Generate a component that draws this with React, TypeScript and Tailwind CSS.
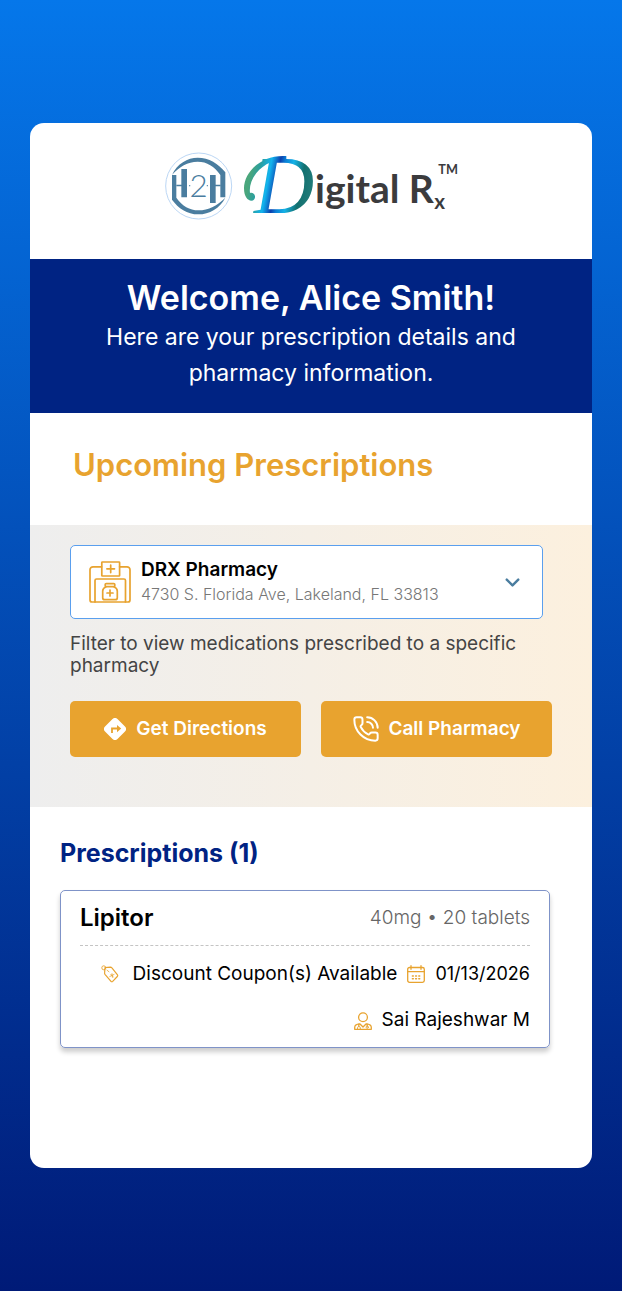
import React, { useState } from "react";
import { ChevronDown, PhoneCall } from "lucide-react";

const pharmacies = [{
  id: "drx",
  name: "DRX Pharmacy",
  address: "4730 S. Florida Ave, Lakeland, FL 33813"
}];

const prescriptions = [{
  name: "Lipitor",
  dose: "40mg • 20 tablets",
  coupon: "Discount Coupon(s) Available",
  date: "01/13/2026",
  doctor: "Sai Rajeshwar M"
}];

const Logo = () => <svg className="w-[312px] h-24" viewBox="0 -24 936 288" role="img" aria-label="H2H Digital Rx">
    <defs>
      <linearGradient id="logo-d" gradientUnits="userSpaceOnUse" x1="285" y1="90" x2="467" y2="125">
        <stop offset="0" stopColor="#4aa67c" />
        <stop offset="0.14" stopColor="#2a9fa0" />
        <stop offset="0.3" stopColor="#12b4ee" />
        <stop offset="0.44" stopColor="#0b3fae" />
        <stop offset="0.52" stopColor="#0b7fd6" />
        <stop offset="0.66" stopColor="#14b2e6" />
        <stop offset="0.84" stopColor="#12706f" />
        <stop offset="1" stopColor="#1f7a78" />
      </linearGradient>
    </defs>
    <circle cx="131" cy="123" r="99" fill="none" stroke="#bcd7f5" strokeWidth="3" />
    <g fill="#4a7d9f">
      <path d="M51 90C66 56 98 38 128 38c34 0 62 18 83 44v75h-15V90c-18-26-40-40-68-40-30 0-55 15-77 40z" />
      <path d="M211 158c-16 32-48 50-81 50-34 0-60-18-79-44V90h13v68c18 25 40 38 66 38 31 0 57-14 81-38z" />
      <path d="M79 72h17v85H79zM165 90h17v84h-17zM64 119h15v5H64zM182 119h15v5h-15z" />
      <circle cx="104" cy="122" r="2" />
      <circle cx="157" cy="122" r="2" />
      <text x="131" y="156" textAnchor="middle" fontSize="94" fontWeight="300" fontFamily="Lato, sans-serif">2</text>
    </g>
    <path d="M394 33C318 28 267 82 267 130c0 25 11 37 22 37 8 0 12-7 11-13-1-8-8-12-15-10-6-42 36-101 109-101z" fill="url(#logo-d)" />
    <text x="297" y="204" fontSize="250" fontStyle="italic" fontFamily="Liberation Serif, serif" fill="url(#logo-d)">D</text>
    <g fill="#3b3b3d" fontFamily="Lato, sans-serif" fontWeight="700">
      <text x="480" y="175" fontSize="117">igital R</text>
      <text x="838" y="193" fontSize="62">x</text>
      <text x="850" y="86" fontSize="38">TM</text>
    </g>
  </svg>;

const PharmacyIcon = () => <svg className="w-[42px] h-[42px] shrink-0" viewBox="0 0 42 42" fill="none" stroke="#e8a32f" strokeWidth="1.7" strokeLinecap="round" strokeLinejoin="round" aria-hidden="true">
    <path d="M12.6 5.8H4a3 3 0 0 0-3 3V39a2 2 0 0 0 2 2h36a2 2 0 0 0 2-2V8.800a3 3 0 0 0-3-3h-7.400" />
    <rect x="12.800" y="1" width="17.800" height="14" rx=".6" />
    <path d="M21.700 4v7.600M17.900 7.800h7.600M6 41V19.500a1.500 1.500 0 0 1 1.500-1.500h27.500a1.500 1.500 0 0 1 1.500 1.500V41" />
    <rect x="16.200" y="22.600" width="9.600" height="3" rx="1" />
    <path d="M17 25.800c-2 1-3.300 2.300-3.300 4.200v6.700c0 1.100.9 2 2 2h10.600a2 2 0 0 0 2-2V30c0-1.900-1.300-3.200-3.300-4.200M21 29v6M18 32h6" />
  </svg>;

const DirectionsIcon = () => <svg className="w-[22px] h-[22px]" viewBox="0 0 22 22" aria-hidden="true">
    <path d="M11 3.500L18.500 11 11 18.500 3.500 11z" fill="white" stroke="white" strokeWidth="7" strokeLinejoin="round" />
    <path d="M8 15V10.500h6" fill="none" stroke="#e8a32f" strokeWidth="1.800" />
    <path d="M13 7l4.200 3.600L13 14.200z" fill="#e8a32f" />
  </svg>;

const TagIcon = () => <svg className="w-[18px] h-[18px]" viewBox="0 0 18 18" fill="none" stroke="#e8a32f" strokeWidth="1.200" strokeLinecap="round" strokeLinejoin="round" aria-hidden="true">
    <path d="M4 2.500l5.500-.3c.6 0 1 .2 1.400.6l5.600 7c.4.6.3 1.200-.2 1.700l-4.600 4.900c-.5.5-1.200.5-1.700-.1L4 9.300c-.4-.5-.5-.9-.4-1.400z" />
    <circle cx="2.800" cy="2.800" r="2" strokeWidth=".9" />
    <path d="M6 5.200l2 1.600M8.800 11.500l4.200-2M9.800 9.300l2.600 2.800M11 8.700l.4 3.600" strokeWidth=".8" />
  </svg>;

const CalendarIcon = () => <svg className="w-[18px] h-[18px]" viewBox="0 0 18 18" fill="none" stroke="#e8a32f" strokeWidth="1.300" strokeLinecap="round" aria-hidden="true">
    <rect x=".7" y="2.500" width="16.600" height="14.800" rx="1.800" />
    <path d="M.7 6.700h16.600M4 .7v3.600M14 .7v3.600" />
    <path d="M5.400 11h.9M8.600 11h.9M11.800 11h.9M5.400 13.800h.9M8.600 13.800h.9M11.800 13.800h.9" strokeWidth="1.500" />
  </svg>;

const DoctorIcon = () => <svg className="w-[18px] h-[18px]" viewBox="0 0 18 18" fill="none" stroke="#e8a32f" strokeWidth="1.300" strokeLinecap="round" strokeLinejoin="round" aria-hidden="true">
    <circle cx="9" cy="5.200" r="4.400" />
    <path d="M5.500 11.800c-3 .2-4.800 1.500-4.800 3.700v1.800h16.600v-1.800c0-2.200-1.800-3.500-4.800-3.700M6 12l3 3 3-3M4.800 12v2M13.200 12v2" />
    <path d="M3.500 16.800v-1c0-1.800 2.800-1.800 2.800 0v1" strokeWidth=".9" />
    <circle cx="13.200" cy="15.200" r="1.100" strokeWidth=".9" />
  </svg>;

export default function App() {
  const [pharmacyId, setPharmacyId] = useState("drx");
  const pharmacy = pharmacies.find(p => p.id === pharmacyId) || pharmacies[0];
  return <div className="min-h-screen px-[30px] py-[123px] bg-linear-to-b/srgb from-[#0577ea] to-[#001a77] font-[Inter,sans-serif]">
      <main className="bg-white rounded-[14px] overflow-hidden pb-[120px]">
        <header className="flex justify-center pt-[14px] pb-[26px]">
          <Logo />
        </header>
        <section className="bg-[#002383] text-white text-center px-10 pt-[18px] pb-[22px]">
          <h1 className="text-[34px] leading-[42px] font-semibold">Welcome, Alice Smith!</h1>
          <p className="text-[23px] leading-9">
            Here are your prescription details and pharmacy information.
          </p>
        </section>
        <h2 className="px-[43px] pt-7 pb-9 text-[31px] leading-12 font-semibold text-[#e8a32f]">
          Upcoming Prescriptions
        </h2>
        <section className="bg-linear-to-r/srgb from-[#eeeeee] to-[#fcf0de] px-10 pt-5 pb-[50px]">
          <div className="flex items-center gap-[10px] mr-[9px] h-[74px] pl-[18px] pr-[18px] bg-white border border-[#5a9fee] rounded-[5px]">
            <PharmacyIcon />
            <div className="flex-1">
              <select id="pharmacy" value={pharmacyId} onChange={e => setPharmacyId(e.target.value)} className="block w-full appearance-none bg-transparent text-[19px] leading-6 font-semibold text-black">
                {pharmacies.map(p => <option key={p.id} value={p.id}>{p.name}</option>)}
              </select>
              <p className="text-base leading-6 font-light text-[#777777]">{pharmacy.address}</p>
            </div>
            <ChevronDown className="w-[23px] h-[23px] text-[#4a7d9f]" strokeWidth={2.500} aria-hidden="true" />
          </div>
          <label htmlFor="pharmacy" className="block mt-[14px] text-[19px] leading-[22px] text-[#444444]">
            Filter to view medications prescribed to a specific pharmacy
          </label>
          <div className="grid grid-cols-2 gap-5 mt-6">
            <button className="flex items-center justify-center gap-[10px] h-14 rounded-[5px] bg-[#e8a32f] text-white text-[19px] font-semibold">
              <DirectionsIcon />
              Get Directions
            </button>
            <button className="flex items-center justify-center gap-2 h-14 rounded-[5px] bg-[#e8a32f] text-white text-[19px] font-semibold">
              <PhoneCall className="w-7 h-7" strokeWidth={1.700} aria-hidden="true" />
              Call Pharmacy
            </button>
          </div>
        </section>
        <section className="pl-[30px] pr-[42px] pt-7">
          <h2 className="text-[25px] leading-9 font-bold text-[#002383]">
            Prescriptions ({prescriptions.length})
          </h2>
          {prescriptions.map(rx => <article key={rx.name} className="mt-[19px] px-[19px] pt-1 pb-[7px] border border-[#7f93c8] rounded-[5px] shadow-[0_4px_5px_rgba(0,0,0,0.2)]">
              <div className="flex items-center justify-between h-[51px] pb-1 border-b border-dashed border-[#c4c4c4]">
                <h3 className="text-2xl font-semibold">{rx.name}</h3>
                <span className="text-[19px] font-light text-[#666666]">{rx.dose}</span>
              </div>
              <div className="flex flex-wrap items-center justify-end gap-[10px] h-[46px] mt-[5px] text-[19px]">
                <TagIcon />
                <span className="ml-1">{rx.coupon}</span>
                <CalendarIcon />
                <span className="text-lg">{rx.date}</span>
              </div>
              <div className="flex items-center justify-end gap-[10px] h-[43px] pt-1 text-[19px]">
                <DoctorIcon />
                <span>{rx.doctor}</span>
              </div>
            </article>)}
        </section>
      </main>
    </div>;
}
